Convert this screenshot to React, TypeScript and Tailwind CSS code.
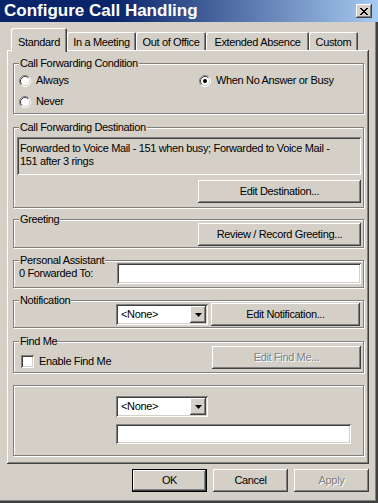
import React from "react";

const raised =
  "bg-[#d4d0c8] shadow-[inset_-1px_-1px_#404040,inset_1px_1px_#ffffff,inset_-2px_-2px_#808080]";
const sunken =
  "shadow-[inset_1px_1px_#808080,inset_-1px_-1px_#ffffff,inset_2px_2px_#404040,inset_-2px_-2px_#d4d0c8]";
const disabledText = "text-[#808080] [text-shadow:1px_1px_0_#ffffff]";

function Radio({ checked = false }: { checked?: boolean }) {
  return (
    <svg width="12" height="12" viewBox="0 0 12 12" className="shrink-0">
      <circle cx="6" cy="6" r="5" fill="#ffffff" />
      <path d="M2.11 9.89 A5.5 5.5 0 0 1 9.89 2.11" fill="none" stroke="#808080" />
      <path d="M9.89 2.11 A5.5 5.5 0 0 1 2.11 9.89" fill="none" stroke="#ffffff" />
      <path d="M2.82 9.18 A4.5 4.5 0 0 1 9.18 2.82" fill="none" stroke="#404040" />
      <path d="M9.18 2.82 A4.5 4.5 0 0 1 2.82 9.18" fill="none" stroke="#d4d0c8" />
      {checked && <circle cx="6" cy="6" r="2" fill="#000000" />}
    </svg>
  );
}

function Group({
  label,
  className,
  children,
}: {
  label?: string;
  className: string;
  children: React.ReactNode;
}) {
  return (
    <div
      className={`relative w-[351px] shrink-0 border border-[#808080] shadow-[inset_1px_1px_#ffffff,1px_1px_#ffffff] ${className}`}
    >
      {label && (
        <span className="absolute -top-[7px] left-[5px] bg-[#d4d0c8] px-[1px] leading-[13px]">
          {label}
        </span>
      )}
      {children}
    </div>
  );
}

function Button({
  className,
  disabled = false,
  children,
}: {
  className: string;
  disabled?: boolean;
  children: React.ReactNode;
}) {
  return (
    <div
      className={`h-[23px] shrink-0 flex items-center justify-center ${raised} ${
        disabled ? disabledText : ""
      } ${className}`}
    >
      {children}
    </div>
  );
}

function Select() {
  return (
    <div className={`w-[92px] h-[21px] shrink-0 bg-white flex items-center pl-[5px] pr-[2px] ${sunken}`}>
      <span>{"<None>"}</span>
      <div className={`ml-auto w-[16px] h-[17px] flex items-center justify-center ${raised}`}>
        <svg width="7" height="4" viewBox="0 0 7 4">
          <path d="M0 0h7l-3.5 4z" fill="#000000" />
        </svg>
      </div>
    </div>
  );
}

export default function App() {
  return (
    <div className="w-[378px] h-[503px] overflow-hidden bg-[#d4d0c8] text-black font-['Liberation_Sans',Arial,sans-serif] text-[11px] leading-[13px] tracking-[-0.35px] flex flex-col">
      <div className="h-[22px] shrink-0 flex items-center bg-[linear-gradient(90deg,#0a246a_30%,#a6caf0)] pl-[4px] pr-[6px]">
        <span className="text-white font-bold text-[17px] leading-[22px] tracking-normal">
          Configure Call Handling
        </span>
        <div className={`ml-auto w-[16px] h-[14px] flex items-center justify-center ${raised}`}>
          <svg width="8" height="7" viewBox="0 0 8 7" shapeRendering="crispEdges">
            <path
              d="M0 0h2v1H0z M6 0h2v1H6z M1 1h2v1H1z M5 1h2v1H5z M2 2h4v1H2z M3 3h2v1H3z M2 4h4v1H2z M1 5h2v1H1z M5 5h2v1H5z M0 6h2v1H0z M6 6h2v1H6z"
              fill="#000000"
            />
          </svg>
        </div>
      </div>

      <div className="flex-1 flex flex-col shadow-[inset_-2px_-2px_#404040,inset_-3px_-3px_#808080]">
        <div className="mt-[6px] h-[22px] flex items-end pl-[11px]">
          <div className="relative z-10 w-[56px] h-[24px] -mb-[2px] bg-[#d4d0c8] rounded-t-[2px] pt-[8px] text-center shadow-[inset_1px_1px_#ffffff,inset_-1px_0_#404040,inset_-2px_0_#808080]">
            Standard
          </div>
          <div className="w-[69px] h-[18px] rounded-t-[2px] pt-[4px] text-center shadow-[inset_1px_1px_#ffffff,inset_-1px_0_#404040,inset_-2px_0_#808080]">
            In a Meeting
          </div>
          <div className="w-[70px] h-[18px] rounded-t-[2px] pt-[4px] text-center shadow-[inset_1px_1px_#ffffff,inset_-1px_0_#404040,inset_-2px_0_#808080]">
            Out of Office
          </div>
          <div className="w-[103px] h-[18px] rounded-t-[2px] pt-[4px] text-center shadow-[inset_1px_1px_#ffffff,inset_-1px_0_#404040,inset_-2px_0_#808080]">
            Extended Absence
          </div>
          <div className="w-[49px] h-[18px] rounded-t-[2px] pt-[4px] text-center shadow-[inset_1px_1px_#ffffff,inset_-1px_0_#404040,inset_-2px_0_#808080]">
            Custom
          </div>
        </div>

        <div className={`ml-[7px] w-[362px] h-[414px] shrink-0 flex flex-col px-[6px] ${raised}`}>
          <Group label="Call Forwarding Condition" className="mt-[13px] h-[51px]">
            <div className="pt-[10px] pl-[5px] flex flex-col gap-[8px]">
              <div className="flex items-center">
                <div className="w-[180px] flex items-center gap-[5px]">
                  <Radio />
                  <span>Always</span>
                </div>
                <div className="flex items-center gap-[5px]">
                  <Radio checked />
                  <span>When No Answer or Busy</span>
                </div>
              </div>
              <div className="flex items-center gap-[5px]">
                <Radio />
                <span>Never</span>
              </div>
            </div>
          </Group>

          <Group label="Call Forwarding Destination" className="mt-[13px] h-[81px]">
            <div className="pt-[9px] pl-[3px] pr-[2px] flex flex-col">
              <div className={`w-[344px] h-[38px] bg-[#d4d0c8] pl-[3px] pt-[5px] ${sunken}`}>
                <div className="whitespace-nowrap">
                  Forwarded to Voice Mail - 151 when busy; Forwarded to Voice Mail -
                </div>
                <div className="whitespace-nowrap">151 after 3 rings</div>
              </div>
              <Button className="mt-[5px] self-end w-[163px]">Edit Destination...</Button>
            </div>
          </Group>

          <Group label="Greeting" className="mt-[11px] h-[29px]">
            <div className="pt-[3px] pr-[2px] flex justify-end">
              <Button className="w-[163px]">Review / Record Greeting...</Button>
            </div>
          </Group>

          <Group label="Personal Assistant" className="mt-[12px] h-[28px]">
            <div className="pt-[2px] pl-[5px] pr-[2px] flex items-center">
              <span className="w-[98px]">0 Forwarded To:</span>
              <div className={`w-[244px] h-[21px] bg-white ${sunken}`} />
            </div>
          </Group>

          <Group label="Notification" className="mt-[12px] h-[28px]">
            <div className="pt-[2px] pl-[102px] flex items-center gap-[3px]">
              <Select />
              <Button className="w-[149px]">Edit Notification...</Button>
            </div>
          </Group>

          <Group label="Find Me" className="mt-[13px] h-[32px]">
            <div className="pt-[4px] pl-[7px] pr-[2px] flex items-start">
              <div className="mt-[9px] flex items-center gap-[5px]">
                <div className={`w-[13px] h-[13px] bg-white ${sunken}`} />
                <span>Enable Find Me</span>
              </div>
              <Button disabled className="ml-auto w-[149px]">
                Edit Find Me...
              </Button>
            </div>
          </Group>

          <Group className="mt-[12px] h-[71px]">
            <div className="pt-[10px] pl-[102px] flex flex-col">
              <Select />
              <div className={`mt-[7px] w-[235px] h-[20px] bg-white ${sunken}`} />
            </div>
          </Group>
        </div>

        <div className="mt-[5px] flex justify-end gap-[6px] pr-[9px]">
          <Button className="w-[75px] shadow-[inset_0_0_0_1px_#000000,inset_-2px_-2px_#404040,inset_2px_2px_#ffffff,inset_-3px_-3px_#808080]">
            OK
          </Button>
          <Button className="w-[75px]">Cancel</Button>
          <Button disabled className="w-[75px]">
            Apply
          </Button>
        </div>
      </div>
    </div>
  );
}
